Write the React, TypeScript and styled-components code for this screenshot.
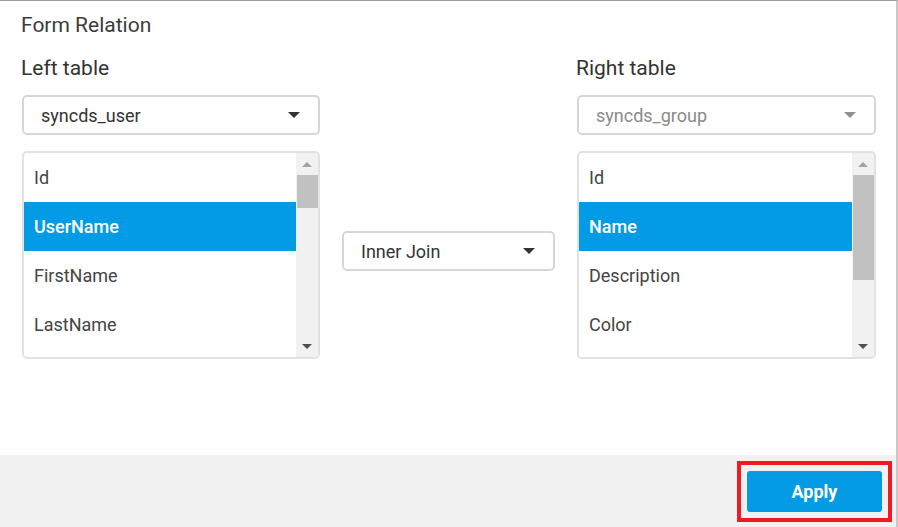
import styled, { createGlobalStyle } from 'styled-components';

const GlobalStyle = createGlobalStyle`
  html, body {
    margin: 0;
    padding: 0;
    background: #ffffff;
    font-family: Roboto, 'Liberation Sans', Arial, sans-serif;
  }
`;

const Dialog = styled.div`
  width: 896px;
  height: 526px;
  border-top: 1px solid #9a9a9a;
  border-right: 2px solid #c8c8c8;
  border-bottom: 1px solid #c8c8c8;
  display: flex;
  flex-direction: column;
  background: #fff;
`;

const Body = styled.div`
  flex: 1;
  padding: 0 21px 0 22px;
`;

const Title = styled.div`
  height: 49px;
  line-height: 49px;
  font-size: 21px;
  color: #3c3c3c;
  margin-left: -1px;
`;

const Columns = styled.div`
  display: grid;
  grid-template-columns: 298px 213px 299px;
  column-gap: 22px;
  align-items: start;
`;

const Column = styled.div`
  display: flex;
  flex-direction: column;
`;

const Label = styled.div`
  font-size: 21px;
  color: #333;
  height: 36px;
  line-height: 36px;
  margin-bottom: 9px;
  margin-left: -1px;
`;

const Select = styled.div<{ $muted?: boolean }>`
  height: 36px;
  border: 2px solid #d6d6d6;
  border-radius: 5px;
  display: flex;
  align-items: center;
  justify-content: space-between;
  padding: 0 18px 0 17px;
  font-size: 18px;
  color: ${({ $muted }) => ($muted ? '#8a8a8a' : '#333')};
`;

const Caret = styled.span<{ $muted?: boolean }>`
  width: 0;
  height: 0;
  border-left: 6px solid transparent;
  border-right: 6px solid transparent;
  border-top: 6px solid ${({ $muted }) => ($muted ? '#8f8f8f' : '#333')};
`;

const ListBox = styled.div`
  margin-top: 16px;
  height: 204px;
  border: 2px solid #e2e2e2;
  border-radius: 5px;
  display: flex;
  overflow: hidden;
`;

const Items = styled.div`
  flex: 1;
  display: flex;
  flex-direction: column;
`;

const Item = styled.div<{ $selected?: boolean }>`
  height: 49px;
  flex-shrink: 0;
  display: flex;
  align-items: center;
  padding-left: 10px;
  font-size: 18px;
  color: ${({ $selected }) => ($selected ? '#fff' : '#444')};
  background: ${({ $selected }) => ($selected ? '#039be5' : 'transparent')};
  font-weight: ${({ $selected }) => ($selected ? 500 : 400)};
`;

const ScrollBar = styled.div`
  width: 22px;
  background: #f1f1f1;
  display: flex;
  flex-direction: column;
  align-items: center;
`;

const ScrollArrow = styled.div<{ $down?: boolean; $active?: boolean }>`
  height: 22px;
  width: 100%;
  flex-shrink: 0;
  display: flex;
  align-items: center;
  justify-content: center;

  &::after {
    content: '';
    width: 0;
    height: 0;
    border-left: 5px solid transparent;
    border-right: 5px solid transparent;
    ${({ $down, $active }) =>
      $down
        ? `border-top: 5px solid ${$active ? '#505050' : '#a3a3a3'};`
        : `border-bottom: 5px solid ${$active ? '#505050' : '#a3a3a3'};`}
  }
`;

const Thumb = styled.div`
  width: 21px;
  margin-left: 1px;
  background: #c1c1c1;
  flex-shrink: 0;
`;

const Spacer = styled.div`
  flex: 1;
`;

const Middle = styled.div`
  padding-top: 181px;
`;

const Footer = styled.div`
  height: 72px;
  background: #f1f1f1;
  display: flex;
  justify-content: flex-end;
  align-items: center;
  padding-right: 4px;
`;

const Highlight = styled.div`
  border: 4px solid #ed1c24;
  padding: 6px;
`;

const ApplyButton = styled.button`
  width: 135px;
  height: 41px;
  border: none;
  border-radius: 3px;
  background: #039be5;
  color: #fff;
  font-family: Roboto, 'Liberation Sans', Arial, sans-serif;
  font-size: 18px;
  font-weight: 700;
  cursor: pointer;
`;

type TableProps = {
  label: string;
  table: string;
  muted?: boolean;
  fields: string[];
  selected: number;
  thumb: number;
};

const TablePicker = ({ label, table, muted, fields, selected, thumb }: TableProps) => (
  <Column>
    <Label>{label}</Label>
    <Select $muted={muted}>
      {table}
      <Caret $muted={muted} />
    </Select>
    <ListBox>
      <Items>
        {fields.map((f, i) => (
          <Item key={f} $selected={i === selected}>
            {f}
          </Item>
        ))}
      </Items>
      <ScrollBar>
        <ScrollArrow />
        <Thumb style={{ height: thumb }} />
        <Spacer />
        <ScrollArrow $down $active />
      </ScrollBar>
    </ListBox>
  </Column>
);

export default function App() {
  return (
    <>
      <GlobalStyle />
      <Dialog>
        <Body>
          <Title>Form Relation</Title>
          <Columns>
            <TablePicker
              label="Left table"
              table="syncds_user"
              fields={['Id', 'UserName', 'FirstName', 'LastName']}
              selected={1}
              thumb={33}
            />
            <Middle>
              <Select>
                Inner Join
                <Caret />
              </Select>
            </Middle>
            <TablePicker
              label="Right table"
              table="syncds_group"
              muted
              fields={['Id', 'Name', 'Description', 'Color']}
              selected={1}
              thumb={105}
            />
          </Columns>
        </Body>
        <Footer>
          <Highlight>
            <ApplyButton>Apply</ApplyButton>
          </Highlight>
        </Footer>
      </Dialog>
    </>
  );
}
